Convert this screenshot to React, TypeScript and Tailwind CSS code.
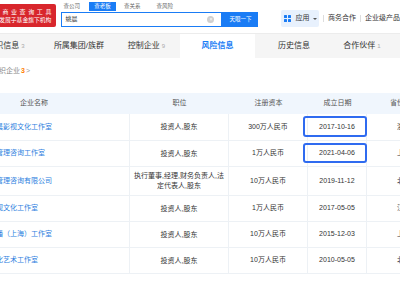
import React from "react";

type Row = {
  name: string;
  role: string;
  capital: string;
  date: string;
  region: string;
  marked?: boolean;
  tall?: boolean;
};

const rows: Row[] = [
  { name: "北京市姚晨影视文化工作室", role: "投资人,股东", capital: "300万人民币", date: "2017-10-16", region: "浙江", marked: true },
  { name: "姚晨企业管理咨询工作室", role: "投资人,股东", capital: "1万人民币", date: "2021-04-06", region: "上海", marked: true },
  { name: "上海企业管理咨询有限公司", role: "执行董事,经理,财务负责人,法定代表人,股东", capital: "10万人民币", date: "2019-11-12", region: "北京", tall: true },
  { name: "杭州晨影视文化工作室", role: "投资人,股东", capital: "1万人民币", date: "2017-05-05", region: "江苏" },
  { name: "姚晨星传播（上海）工作室", role: "投资人,股东", capital: "10万人民币", date: "2015-12-03", region: "上海" },
  { name: "北京晨文化艺术工作室", role: "投资人,股东", capital: "10万人民币", date: "2010-05-05", region: "北京" },
];

const Header = () => (
  <div className="h-[34px] flex items-start bg-white border-b border-[#ececec]">
    {/* logo */}
    <div className="mt-[4px] h-[23px] w-[57px] bg-[#d8262c] rounded-r-[2px] overflow-hidden flex flex-col items-end justify-center pr-[5px] text-white leading-[8px]">
      <div className="text-[6px] tracking-[2.6px] mr-[-2.6px] whitespace-nowrap">商业查询工具</div>
      <div className="text-[5.8px] whitespace-nowrap">国家中小企业发展子基金旗下机构</div>
    </div>

    {/* search */}
    <div className="ml-[5px] mt-[2px] flex flex-col">
      <div className="h-[9px] flex items-center text-[5.5px] text-[#666] leading-none">
        <span className="ml-[2px]">查公司</span>
        <span className="ml-[9px] w-[27px] h-[9px] bg-[#1a7cf5] text-white flex items-center justify-center">查老板</span>
        <span className="ml-[8px]">查关系</span>
        <span className="ml-[16px]">查风险</span>
      </div>
      <div className="mt-[1px] flex h-[15px]">
        <div className="w-[161px] border border-[#1a7cf5] flex items-center pl-[3px] pr-[7px] text-[6px] text-[#333]">
          <span className="flex-1">姚晨</span>
          <span className="w-[7px] h-[7px] rounded-full bg-[#cfcfcf] text-white text-[5px] leading-none flex items-center justify-center">×</span>
        </div>
        <div className="w-[36px] bg-[#1a7cf5] text-white text-[5.5px] flex items-center justify-center">天眼一下</div>
      </div>
    </div>

    {/* right nav */}
    <div className="ml-[23px] mt-[10px] h-[17px] w-[38px] bg-[#e8f1fd] rounded-[2px] flex items-center pl-[3px] text-[7px] text-[#333]">
      <span className="grid grid-cols-2 gap-[1px]">
        <span className="w-[3px] h-[3px] bg-[#1a7cf5] rounded-[0.5px]" />
        <span className="w-[3px] h-[3px] bg-[#1a7cf5] rounded-[0.5px]" />
        <span className="w-[3px] h-[3px] bg-[#1a7cf5] rounded-[0.5px]" />
        <span className="w-[3px] h-[3px] bg-[#1a7cf5] rounded-[0.5px]" />
      </span>
      <span className="ml-[4px]">应用</span>
      <span className="ml-[4px] w-0 h-0 border-l-[2px] border-r-[2px] border-t-[2.5px] border-l-transparent border-r-transparent border-t-[#555]" />
    </div>
    <div className="mt-[10px] h-[17px] flex items-center text-[7px] text-[#333] whitespace-nowrap">
      <span className="ml-[4px] w-px h-[7px] bg-[#ddd]" />
      <span className="ml-[4px]">商务合作</span>
      <span className="ml-[4px] w-px h-[7px] bg-[#ddd]" />
      <span className="ml-[4px]">企业级产品</span>
    </div>
  </div>
);

const Tabs = () => (
  <div className="h-[24px] bg-[#f5f5f5] flex items-stretch text-[8px] text-[#333] whitespace-nowrap">
    <div className="ml-[37px] w-[78px] flex items-center justify-center">
      组织信息<span className="ml-[2px] text-[6px] text-[#aaa]">3</span>
    </div>
    <div className="w-[68px] flex items-center justify-center">所属集团/族群</div>
    <div className="w-[67px] flex items-center justify-center">
      控制企业<span className="ml-[2px] text-[6px] text-[#aaa]">9</span>
    </div>
    <div className="w-[75px] bg-white flex items-center justify-center text-[#1a7cf5] font-semibold">风险信息</div>
    <div className="w-[78px] flex items-center justify-center">历史信息</div>
    <div className="w-[58px] flex items-center justify-center">
      合作伙伴<span className="ml-[2px] text-[6px] text-[#aaa]">1</span>
    </div>
  </div>
);

const Table = () => (
  <div className="ml-[8px] mt-[18px] text-[7px] text-[#333] whitespace-nowrap">
    <div className="h-[21px] flex items-center bg-[#f0f6fd] text-[#555]">
      <div className="w-[192px] text-center">企业名称</div>
      <div className="w-[99px] text-center">职位</div>
      <div className="w-[79px] text-center">注册资本</div>
      <div className="w-[59px] text-center">成立日期</div>
      <div className="w-[74px] text-center">省份地区</div>
    </div>
    {rows.map((r, i) => (
      <div
        key={i}
        className={`flex items-stretch border-b border-[#edf1f5] ${
          r.tall ? "h-[29px]" : i === 0 ? "h-[27px]" : "h-[26px]"
        }`}
      >
        <div className="w-[192px] flex items-center pl-[30px] text-[#2e7fe0] border-r border-[#edf1f5]">{r.name}</div>
        <div className="w-[99px] flex items-center justify-center px-[3px] text-center whitespace-normal leading-[10px] border-r border-[#edf1f5]">
          {r.role}
        </div>
        <div className="w-[79px] flex items-center justify-center border-r border-[#edf1f5]">{r.capital}</div>
        <div className="relative w-[59px] flex items-center justify-center border-r border-[#edf1f5]">
          {r.date}
          {r.marked && (
            <div className="absolute top-[2px] bottom-[3px] left-[-5px] right-[-1px] border-2 border-[#2f6bf0] rounded-[3px]" />
          )}
        </div>
        <div className="w-[74px] flex items-center justify-center">{r.region}</div>
      </div>
    ))}
  </div>
);

export default function App() {
  return (
    <div className="w-[400px] h-[300px] overflow-hidden bg-white font-['Liberation_Sans','Noto_Sans_CJK_SC',sans-serif]">
      <Header />
      <div className="ml-[-70px] w-[540px]">
        <Tabs />
        <div className="mt-[7px] pl-[62px] h-[10px] flex items-center text-[7px] text-[#888] leading-none">
          组织企业
          <span className="ml-[1px] text-[#ff7d00] font-bold">3</span>
          <span className="ml-[1px] text-[#999]">&gt;</span>
        </div>
        <Table />
      </div>
    </div>
  );
}
